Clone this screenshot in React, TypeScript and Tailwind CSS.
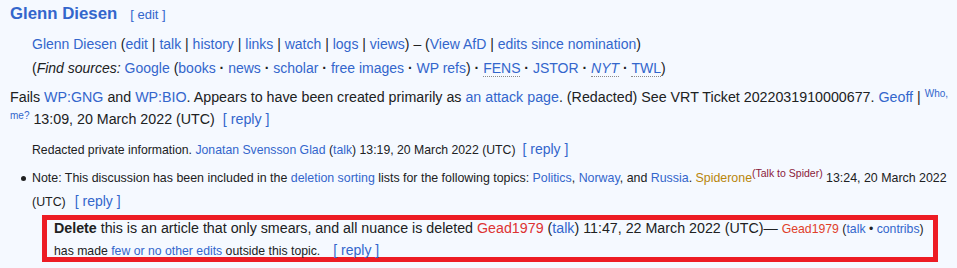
const link = 'text-[#3366cc]';
const red = 'text-[#dd3333]';

function Sep() {
  return <span className="text-[#202122]"> | </span>;
}

function Dot() {
  return <span className="font-bold text-[#202122]"> · </span>;
}

export default function App() {
  return (
    <div className="min-h-[268px] w-[957px] bg-[#f5f9ff] px-[10px] text-[#202122] font-['Liberation_Sans',Arial,sans-serif] whitespace-nowrap">
      <div className="h-[28px] leading-[28px] flex items-baseline">
        <span className={`${link} font-bold text-[16.8px]`}>Glenn Diesen</span>
        <span className={`${link} ml-[13px] text-[13px]`}>[ edit ]</span>
      </div>

      <div className="mt-[4px] ml-[22px] text-[14px] leading-[24px]">
        <div>
          <span className={link}>Glenn Diesen</span> (<span className={link}>edit</span>
          <Sep /><span className={link}>talk</span>
          <Sep /><span className={link}>history</span>
          <Sep /><span className={link}>links</span>
          <Sep /><span className={link}>watch</span>
          <Sep /><span className={link}>logs</span>
          <Sep /><span className={link}>views</span>) – (<span className={link}>View AfD</span>
          <Sep /><span className={link}>edits since nomination</span>)
        </div>
        <div>
          (<i>Find sources:</i> <span className={link}>Google</span> (<span className={link}>books</span>
          <Dot /><span className={link}>news</span>
          <Dot /><span className={link}>scholar</span>
          <Dot /><span className={link}>free images</span>
          <Dot /><span className={link}>WP refs</span>)
          <Dot /><span className={`${link} border-b border-dotted border-[#8a8a8a]`}>FENS</span>
          <Dot /><span className={link}>JSTOR</span>
          <Dot /><span className={`${link} italic border-b border-dotted border-[#8a8a8a]`}>NYT</span>
          <Dot /><span className={`${link} border-b border-dotted border-[#8a8a8a]`}>TWL</span>)
        </div>
      </div>

      <div className="mt-[6px] text-[14.25px] leading-[22px]">
        Fails <span className={link}>WP:GNG</span> and <span className={link}>WP:BIO</span>. Appears to have been created
        primarily as <span className={link}>an attack page</span>. (Redacted) See VRT Ticket 2022031910000677.{' '}
        <span className={link}>Geoff</span> |{' '}
        <sup className={`${link} text-[10px] leading-none`}>Who,</sup>
        <br />
        <sup className={`${link} text-[10px] leading-none`}>me?</sup> 13:09, 20 March 2022 (UTC)
        <span className={`${link} ml-[8px]`}>[ reply ]</span>
      </div>

      <div className="mt-[9px] ml-[22px] text-[12.25px] leading-[20px]">
        Redacted private information. <span className={link}>Jonatan Svensson Glad</span> (
        <span className={link}>talk</span>) 13:19, 20 March 2022 (UTC)
        <span className={`${link} ml-[7px] text-[14px]`}>[ reply ]</span>
      </div>

      <div className="mt-[7px] ml-[22px] relative text-[12.4px] leading-[23px]">
        <span className="absolute left-[-11px] top-[9px] w-[5px] h-[5px] rounded-full bg-[#202122]" />
        Note: This discussion has been included in the <span className={link}>deletion sorting</span> lists for the
        following topics: <span className={link}>Politics</span>, <span className={link}>Norway</span>, and{' '}
        <span className={link}>Russia</span>. <span className="text-[#b8860b]">Spiderone</span>
        <sup className="text-[#8b1a3a] text-[10.5px] leading-none">(Talk to Spider)</sup> 13:24, 20 March 2022
        <br />
        (UTC)
        <span className={`${link} ml-[9px] text-[14px]`}>[ reply ]</span>
      </div>

      <div className="mt-[1px] ml-[32px] w-[896px] h-[47px] border-[5px] border-[#ed1c24] pl-[7px]">
        <div className="h-[16px] leading-[16px] text-[14.25px]">
          <b>Delete</b> this is an article that only smears, and all nuance is deleted{' '}
          <span className={red}>Gead1979</span> (<span className={link}>talk</span>) 11:47, 22 March 2022 (UTC)—{' '}
          <span className="text-[#e0402a] text-[12.25px]">Gead1979</span>
          <span className="text-[12.25px]">
            {' '}(<span className={link}>talk</span> • <span className={link}>contribs</span>)
          </span>
        </div>
        <div className="mt-[5px] leading-[18px] text-[12.25px]">
          has made <span className={link}>few or no other edits</span> outside this topic.
          <span className={`${link} ml-[13px] text-[14px]`}>[ reply ]</span>
        </div>
      </div>
    </div>
  );
}
